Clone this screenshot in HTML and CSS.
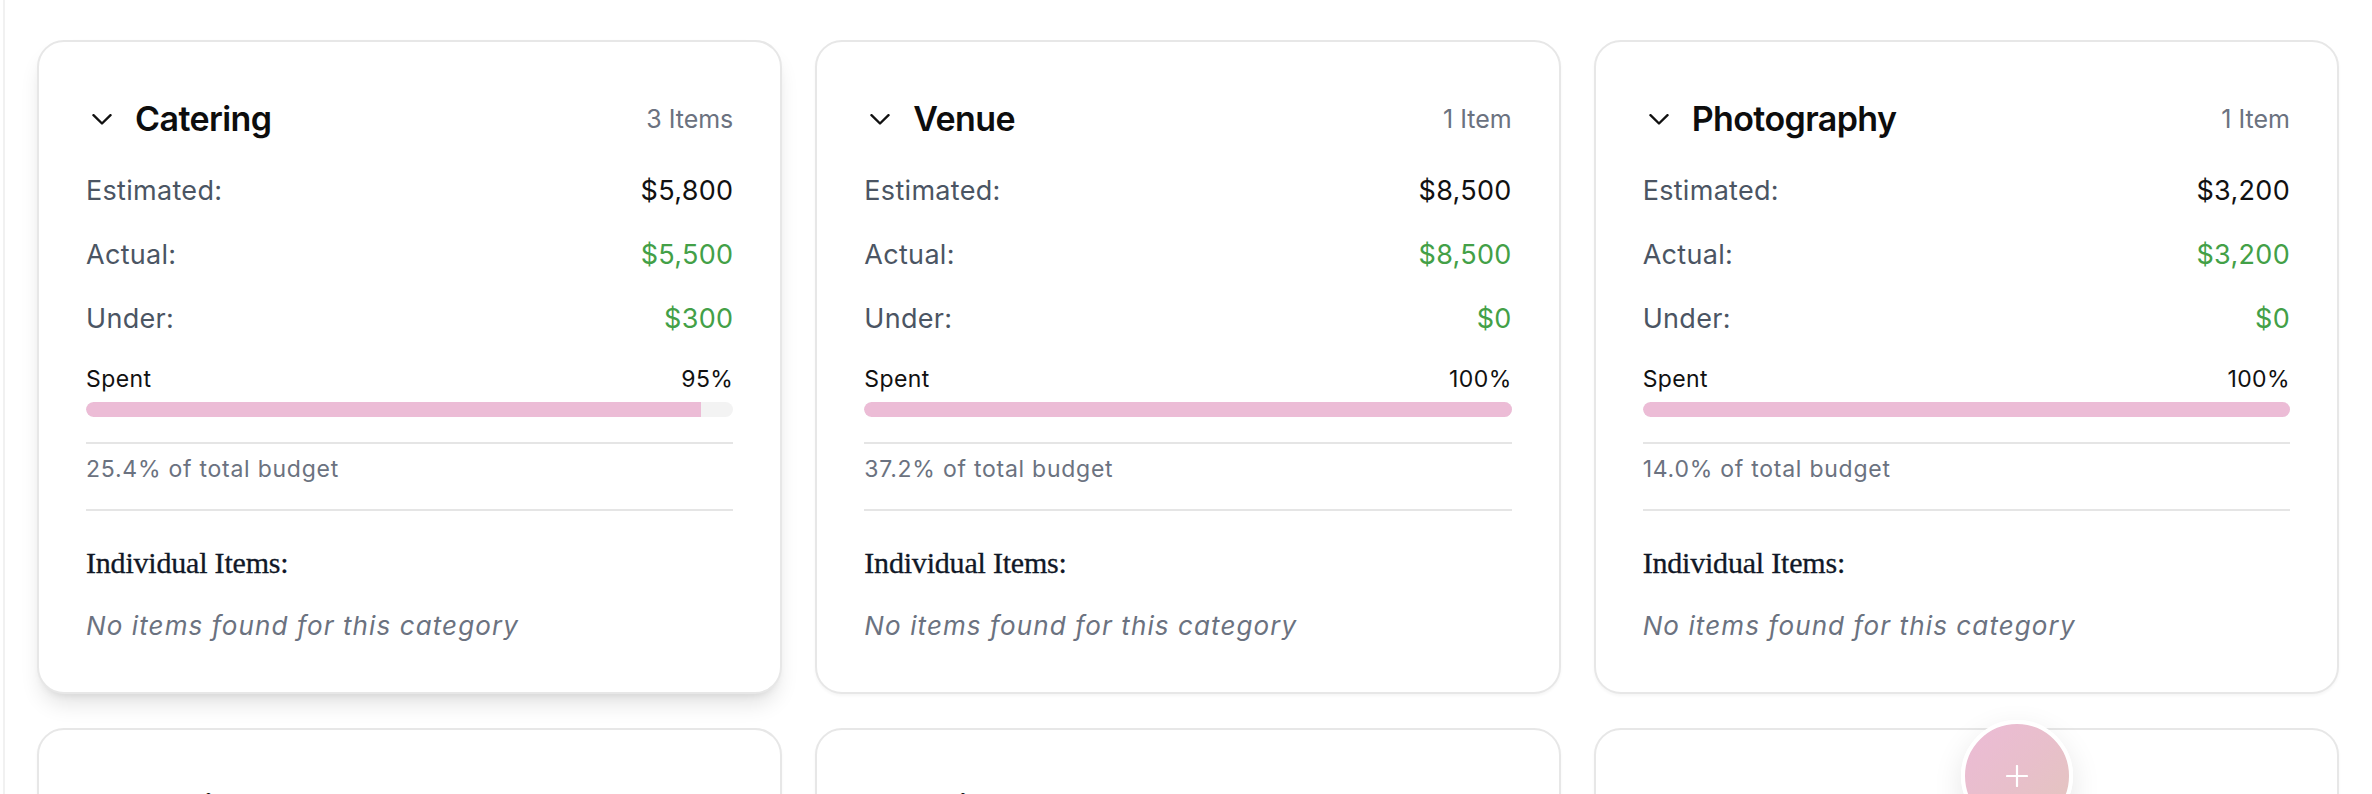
FILE: index.html
```html
<!DOCTYPE html>
<html lang="en">
<head>
<meta charset="utf-8">
<title>Budget Categories</title>
<link rel="stylesheet" href="styles.css">
</head>
<body>
<main class="page">
  <div class="grid">
    <section class="card card--active">
      <header class="card-head">
        <div class="card-title">
          <svg class="chev" viewBox="0 0 20 11" width="20" height="11"><polyline points="1.5,1.2 10,9.5 18.5,1.2"/></svg>
          <h3>Catering</h3>
        </div>
        <span class="count">3 Items</span>
      </header>
      <div class="row"><span class="label">Estimated:</span><span class="value">$5,800</span></div>
      <div class="row"><span class="label">Actual:</span><span class="value green">$5,500</span></div>
      <div class="row"><span class="label">Under:</span><span class="value green">$300</span></div>
      <div class="spent"><span>Spent</span><span>95%</span></div>
      <div class="bar"><div class="fill" style="width:95%"></div></div>
      <p class="share">25.4% of total budget</p>
      <h4 class="items-title">Individual Items:</h4>
      <p class="empty">No items found for this category</p>
    </section>

    <section class="card">
      <header class="card-head">
        <div class="card-title">
          <svg class="chev" viewBox="0 0 20 11" width="20" height="11"><polyline points="1.5,1.2 10,9.5 18.5,1.2"/></svg>
          <h3>Venue</h3>
        </div>
        <span class="count">1 Item</span>
      </header>
      <div class="row"><span class="label">Estimated:</span><span class="value">$8,500</span></div>
      <div class="row"><span class="label">Actual:</span><span class="value green">$8,500</span></div>
      <div class="row"><span class="label">Under:</span><span class="value green">$0</span></div>
      <div class="spent"><span>Spent</span><span>100%</span></div>
      <div class="bar"><div class="fill" style="width:100%"></div></div>
      <p class="share">37.2% of total budget</p>
      <h4 class="items-title">Individual Items:</h4>
      <p class="empty">No items found for this category</p>
    </section>

    <section class="card">
      <header class="card-head">
        <div class="card-title">
          <svg class="chev" viewBox="0 0 20 11" width="20" height="11"><polyline points="1.5,1.2 10,9.5 18.5,1.2"/></svg>
          <h3>Photography</h3>
        </div>
        <span class="count">1 Item</span>
      </header>
      <div class="row"><span class="label">Estimated:</span><span class="value">$3,200</span></div>
      <div class="row"><span class="label">Actual:</span><span class="value green">$3,200</span></div>
      <div class="row"><span class="label">Under:</span><span class="value green">$0</span></div>
      <div class="spent"><span>Spent</span><span>100%</span></div>
      <div class="bar"><div class="fill" style="width:100%"></div></div>
      <p class="share">14.0% of total budget</p>
      <h4 class="items-title">Individual Items:</h4>
      <p class="empty">No items found for this category</p>
    </section>

    <section class="card">
      <header class="card-head">
        <div class="card-title">
          <svg class="chev" viewBox="0 0 20 11" width="20" height="11"><polyline points="1.5,1.2 10,9.5 18.5,1.2"/></svg>
          <h3>Music</h3>
        </div>
        <span class="count">1 Item</span>
      </header>
      <div class="row"><span class="label">Estimated:</span><span class="value">$2,500</span></div>
      <div class="row"><span class="label">Actual:</span><span class="value green">$2,400</span></div>
      <div class="row"><span class="label">Under:</span><span class="value green">$100</span></div>
      <div class="spent"><span>Spent</span><span>96%</span></div>
      <div class="bar"><div class="fill" style="width:96%"></div></div>
      <p class="share">10.9% of total budget</p>
      <h4 class="items-title">Individual Items:</h4>
      <p class="empty">No items found for this category</p>
    </section>

    <section class="card">
      <header class="card-head">
        <div class="card-title">
          <svg class="chev" viewBox="0 0 20 11" width="20" height="11"><polyline points="1.5,1.2 10,9.5 18.5,1.2"/></svg>
          <h3>Attire</h3>
        </div>
        <span class="count">1 Item</span>
      </header>
      <div class="row"><span class="label">Estimated:</span><span class="value">$2,000</span></div>
      <div class="row"><span class="label">Actual:</span><span class="value green">$1,800</span></div>
      <div class="row"><span class="label">Under:</span><span class="value green">$200</span></div>
      <div class="spent"><span>Spent</span><span>90%</span></div>
      <div class="bar"><div class="fill" style="width:90%"></div></div>
      <p class="share">8.8% of total budget</p>
      <h4 class="items-title">Individual Items:</h4>
      <p class="empty">No items found for this category</p>
    </section>

    <section class="card">
      <header class="card-head">
        <div class="card-title">
          <svg class="chev" viewBox="0 0 20 11" width="20" height="11"><polyline points="1.5,1.2 10,9.5 18.5,1.2"/></svg>
          <h3>Flowers</h3>
        </div>
        <span class="count">1 Item</span>
      </header>
      <div class="row"><span class="label">Estimated:</span><span class="value">$1,500</span></div>
      <div class="row"><span class="label">Actual:</span><span class="value green">$1,500</span></div>
      <div class="row"><span class="label">Under:</span><span class="value green">$0</span></div>
      <div class="spent"><span>Spent</span><span>100%</span></div>
      <div class="bar"><div class="fill" style="width:100%"></div></div>
      <p class="share">6.6% of total budget</p>
      <h4 class="items-title">Individual Items:</h4>
      <p class="empty">No items found for this category</p>
    </section>
  </div>

  <button class="fab" type="button" aria-label="Add item">
    <svg viewBox="0 0 22 22" width="22" height="22"><path d="M11 1v20M1 11h20"/></svg>
  </button>
</main>
</body>
</html>
```

FILE: styles.css
```css
* { box-sizing: border-box; }

html, body {
  margin: 0;
  padding: 0;
  background: #ffffff;
}

body {
  font-family: Inter, "Noto Sans", "Liberation Sans", sans-serif;
  color: #111111;
}

.page {
  margin-left: 3px;
  border-left: 2px solid #f1f1f1;
  padding: 40px 33px 60px 32px;
  min-height: 100vh;
}

.grid {
  display: grid;
  grid-template-columns: repeat(3, 1fr);
  column-gap: 33px;
  row-gap: 34px;
}

.card {
  background: #ffffff;
  border: 2px solid #e7e7e7;
  border-radius: 27px;
  padding: 48px 47px 47px 47px;
  display: flex;
  flex-direction: column;
  box-shadow: 0 2px 3px rgba(0, 0, 0, 0.04);
}

.card--active {
  box-shadow: 0 14px 22px -5px rgba(0, 0, 0, 0.12), 0 5px 9px -5px rgba(0, 0, 0, 0.10);
}

.card-head {
  height: 57px;
  display: flex;
  align-items: center;
  justify-content: space-between;
}

.card-title {
  display: flex;
  align-items: center;
}

.chev {
  width: 20px;
  height: 11px;
  margin-left: 6px;
  margin-right: 23px;
  margin-top: 1px;
  fill: none;
  stroke: #111111;
  stroke-width: 2.4;
  stroke-linecap: round;
  stroke-linejoin: round;
}

.card-title h3 {
  margin: 0;
  font-size: 34px;
  font-weight: 600;
  letter-spacing: -0.6px;
  line-height: 57px;
  color: #0d0d0d;
}

.count {
  font-size: 25px;
  color: #6b7280;
  letter-spacing: 0;
}

.row {
  display: flex;
  justify-content: space-between;
  align-items: center;
  height: 42px;
  margin-top: 22px;
  font-size: 27px;
  letter-spacing: 0.3px;
}

.label {
  color: #4b5563;
}

.value {
  color: #111111;
}

.value.green {
  color: #43a047;
}

.spent {
  display: flex;
  justify-content: space-between;
  align-items: center;
  height: 30px;
  margin-top: 25px;
  font-size: 23px;
  letter-spacing: 0.4px;
  color: #111111;
}

.bar {
  margin-top: 8px;
  height: 15px;
  border-radius: 8px;
  background: #f3f3f3;
  overflow: hidden;
}

.fill {
  height: 100%;
  background: #ecbcd6;
  border-radius: 8px 0 0 8px;
}

.share {
  margin: 25px 0 0 0;
  border-top: 2px solid #e5e5e5;
  border-bottom: 2px solid #e5e5e5;
  padding: 7px 0 22px 0;
  line-height: 36px;
  font-size: 23px;
  letter-spacing: 0.75px;
  color: #6b7280;
}

.items-title {
  margin: 32px 0 0 0;
  line-height: 40px;
  font-family: "Liberation Serif", "DejaVu Serif", serif;
  font-weight: normal;
  font-size: 30px;
  letter-spacing: -0.2px;
  color: #111827;
  -webkit-text-stroke: 0.3px #111827;
}

.empty {
  margin: 24px 0 0 0;
  line-height: 38px;
  font-size: 26px;
  letter-spacing: 1.1px;
  font-style: italic;
  color: #6b7280;
}

.fab {
  position: fixed;
  left: 1961px;
  top: 720px;
  width: 112px;
  height: 112px;
  padding: 0;
  border: 4px solid #ffffff;
  border-radius: 50%;
  background: linear-gradient(135deg, #ecbbd6 0%, #e8bfcb 50%, #e3c6bd 100%);
  box-shadow: 0 10px 30px rgba(0, 0, 0, 0.10);
  display: flex;
  align-items: center;
  justify-content: center;
}

.fab svg {
  width: 22px;
  height: 22px;
  fill: none;
  stroke: #ffffff;
  stroke-width: 2.2;
  stroke-linecap: round;
}
```
